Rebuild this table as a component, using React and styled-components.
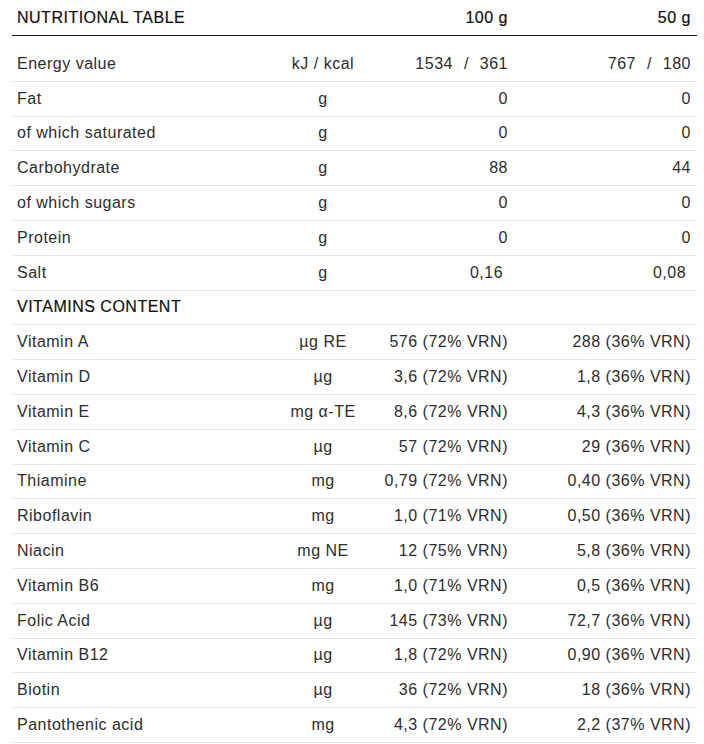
import React from 'react';
import styled, { createGlobalStyle } from 'styled-components';

const GlobalStyle = createGlobalStyle`
  body {
    margin: 0;
    background: #fff;
    font-family: "Liberation Sans", Arial, Helvetica, sans-serif;
    color: #2d2d2d;
  }
`;

const Page = styled.div`
  padding: 0 7px 0 12px;
`;

const COLUMNS = '258px 107px 137px 183px';

const HeadRow = styled.div`
  display: grid;
  grid-template-columns: ${COLUMNS};
  align-items: center;
  height: 36px;
  padding-top: 1px;
  box-sizing: border-box;
  border-bottom: 1px solid #1a1a1a;
`;

const Body = styled.div`
  padding-top: 11px;
`;

const Row = styled.div`
  display: grid;
  grid-template-columns: ${COLUMNS};
  align-items: center;
  height: 34.8px;
  box-sizing: border-box;
  border-bottom: 1px solid #e9e9e9;
`;

const Cell = styled.div`
  padding: 0 6px 0 5px;
  font-size: 16px;
  letter-spacing: 0.5px;
  white-space: pre;
  text-align: ${(p) => p.$align || 'left'};
`;

const Title = styled(Cell)`
  grid-column: ${(p) => p.$span || 'auto'};
  color: #111;
  -webkit-text-stroke: 0.2px #111;
`;

const Slash = styled.span`
  padding: 0 6px;
`;

const nutrition = [
  ['Energy value', 'kJ / kcal', ['1534', '361'], ['767', '180']],
  ['Fat', 'g', '0', '0'],
  ['of which saturated', 'g', '0', '0'],
  ['Carbohydrate', 'g', '88', '44'],
  ['of which sugars', 'g', '0', '0'],
  ['Protein', 'g', '0', '0'],
  ['Salt', 'g', '0,16\u00a0', '0,08\u00a0'],
];

const vitamins = [
  ['Vitamin A', 'µg RE', '576 (72% VRN)', '288 (36% VRN)'],
  ['Vitamin D', 'µg', '3,6 (72% VRN)', '1,8 (36% VRN)'],
  ['Vitamin E', 'mg α-TE', '8,6 (72% VRN)', '4,3 (36% VRN)'],
  ['Vitamin C', 'µg', '57 (72% VRN)', '29 (36% VRN)'],
  ['Thiamine', 'mg', '0,79 (72% VRN)', '0,40 (36% VRN)'],
  ['Riboflavin', 'mg', '1,0 (71% VRN)', '0,50 (36% VRN)'],
  ['Niacin', 'mg NE', '12 (75% VRN)', '5,8 (36% VRN)'],
  ['Vitamin B6', 'mg', '1,0 (71% VRN)', '0,5 (36% VRN)'],
  ['Folic Acid', 'µg', '145 (73% VRN)', '72,7 (36% VRN)'],
  ['Vitamin B12', 'µg', '1,8 (72% VRN)', '0,90 (36% VRN)'],
  ['Biotin', 'µg', '36 (72% VRN)', '18 (36% VRN)'],
  ['Pantothenic acid', 'mg', '4,3 (72% VRN)', '2,2 (37% VRN)'],
];

// energy values come as a pair: kJ / kcal
const renderValue = (value) =>
  Array.isArray(value) ? (
    <>
      {value[0]} <Slash>/</Slash> {value[1]}
    </>
  ) : (
    value
  );

const DataRow = ({ item }) => {
  const [label, unit, full, half] = item;
  return (
    <Row>
      <Cell>{label}</Cell>
      <Cell $align="center">{unit}</Cell>
      <Cell $align="right">{renderValue(full)}</Cell>
      <Cell $align="right">{renderValue(half)}</Cell>
    </Row>
  );
};

const App = () => (
  <>
    <GlobalStyle />
    <Page>
      <HeadRow>
        <Title $span="span 2">NUTRITIONAL TABLE</Title>
        <Title $align="right">100 g</Title>
        <Title $align="right">50 g</Title>
      </HeadRow>
      <Body>
        {nutrition.map((item) => (
          <DataRow key={item[0]} item={item} />
        ))}
        <Row>
          <Title $span="span 4">VITAMINS CONTENT</Title>
        </Row>
        {vitamins.map((item) => (
          <DataRow key={item[0]} item={item} />
        ))}
      </Body>
    </Page>
  </>
);

export default App;
